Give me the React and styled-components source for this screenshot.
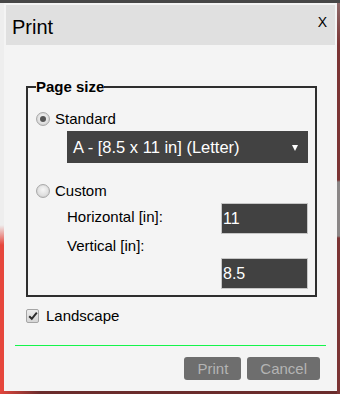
import React from "react";
import styled, { createGlobalStyle } from "styled-components";

const Global = createGlobalStyle`
  html, body { margin: 0; padding: 0; }
  body { font-family: "Liberation Sans", Arial, sans-serif; color: #000; }
  * { box-sizing: border-box; }
`;

const Page = styled.div`
  width: 340px;
  height: 394px;
  padding: 3px 3px 3px 4px;
  display: flex;
  background:
    linear-gradient(#474747, #474747) left top / 100% 3px no-repeat,
    linear-gradient(to bottom, #8f6e6e 0, #7b3434 45px, #7b3434 180px, #8a8686 182px, #8a8686 236px, #7b3434 238px) right top / 3px 100% no-repeat,
    linear-gradient(to right, #e2463d, #6a2c2c 40px, #6a2c2c) left bottom / 100% 3px no-repeat,
    linear-gradient(to bottom, #eeeeee 0, #eeeeee 225px, #e6463c 245px, #e6463c) left top / 4px 100% no-repeat,
    #eeeeee;
`;

const Dialog = styled.div`
  width: 333px;
  height: 388px;
  padding: 2px;
  background: #f4f4f4;
  display: flex;
  flex-direction: column;
`;

const Header = styled.div`
  height: 40px;
  flex: none;
  background: #e0e0e0;
  display: flex;
  justify-content: space-between;
  align-items: flex-start;
  padding: 0 8px 0 6px;
`;

const Title = styled.div`
  font-size: 20px;
  line-height: 40px;
  padding-top: 2px;
`;

const Close = styled.div`
  font-size: 14px;
  line-height: 16px;
  margin-top: 9px;
  cursor: pointer;
`;

const FormArea = styled.div`
  padding: 0 18px 0 20px;
  display: flex;
  flex-direction: column;
`;

const Fieldset = styled.fieldset`
  margin: 33px 0 0 0;
  border: 2px solid #2e2e2e;
  padding: 14px 7px 6px 8px;
  min-width: 0;
  display: flex;
  flex-direction: column;
`;

const Legend = styled.legend`
  font-size: 15px;
  font-weight: bold;
  line-height: 17px;
  padding: 0;
`;

const OptionRow = styled.label`
  display: flex;
  align-items: center;
  gap: ${(p) => p.$gap || 5}px;
  height: 20px;
  font-size: 15px;
  line-height: 20px;
  margin-top: ${(p) => p.$mt || 0}px;
`;

const Radio = styled.span`
  width: 14px;
  height: 14px;
  border-radius: 50%;
  border: 1px solid #a9a9a9;
  background: radial-gradient(circle at 50% 40%, #f6f6f6 0, #dcdcdc 70%, #c9c9c9 100%);
  box-shadow: inset 0 0 1px rgba(0,0,0,0.15);
  display: flex;
  align-items: center;
  justify-content: center;
  flex: none;
  &::after {
    content: "";
    width: 6px;
    height: 6px;
    border-radius: 50%;
    background: ${(p) => (p.$checked ? "#555" : "transparent")};
  }
`;

const Checkbox = styled.span`
  width: 13px;
  height: 14px;
  border: 1px solid #a5a5a5;
  border-radius: 2px;
  background: linear-gradient(#ececec, #d6d6d6);
  display: flex;
  align-items: center;
  justify-content: center;
  flex: none;
`;

const SelectBox = styled.div`
  margin: 2px 0 0 31px;
  height: 32px;
  background: #424242;
  color: #fff;
  font-size: 16.5px;
  line-height: 32px;
  display: flex;
  justify-content: space-between;
  align-items: center;
  padding: 0 10px 0 6px;
`;

const Arrow = styled.span`
  width: 0;
  height: 0;
  border-left: 3px solid transparent;
  border-right: 3px solid transparent;
  border-top: 6px solid #fff;
  margin-top: 1px;
`;

const DimGrid = styled.div`
  margin: 2px 0 0 31px;
  display: grid;
  grid-template-columns: 1fr 87px;
  grid-template-rows: 31px 20px 31px;
  row-gap: 2px;
`;

const DimLabel = styled.span`
  font-size: 15px;
  line-height: 20px;
  margin-top: ${(p) => p.$mt || 0}px;
  grid-column: 1;
  grid-row: ${(p) => p.$row};
  align-self: start;
`;

const DimInput = styled.div`
  grid-column: 2;
  grid-row: ${(p) => p.$row};
  height: 31px;
  border: 1px solid #c6c6c6;
  background: #414141;
  color: #fff;
  font-size: 16px;
  line-height: 29px;
  padding: 0 1px;
`;

const GreenRule = styled.hr`
  margin: 19px 9px 0 9px;
  height: 1px;
  border: none;
  background-color: rgb(20, 245, 75);
  flex: none;
`;

const Buttons = styled.div`
  margin-top: 11px;
  display: flex;
  justify-content: flex-end;
  gap: 6px;
  padding-right: 15px;
`;

const Button = styled.button`
  height: 23px;
  padding: 0 13px;
  border: none;
  border-radius: 3px;
  background: #6e6e6e;
  color: #b4b4b4;
  font-family: "Liberation Sans", Arial, sans-serif;
  font-size: 15px;
  line-height: 21px;
`;

export default function App() {
  return (
    <>
      <Global />
      <Page>
        <Dialog>
          <Header>
            <Title>Print</Title>
            <Close>X</Close>
          </Header>
          <FormArea>
            <Fieldset>
              <Legend>Page size</Legend>
              <OptionRow>
                <Radio $checked />
                Standard
              </OptionRow>
              <SelectBox>
                <span>A - [8.5 x 11 in] (Letter)</span>
                <Arrow />
              </SelectBox>
              <OptionRow $mt={18}>
                <Radio />
                Custom
              </OptionRow>
              <DimGrid>
                <DimLabel $row={1} $mt={4}>Horizontal [in]:</DimLabel>
                <DimInput $row={1}>11</DimInput>
                <DimLabel $row={2}>Vertical [in]:</DimLabel>
                <DimInput $row={3}>8.5</DimInput>
              </DimGrid>
            </Fieldset>
            <OptionRow $mt={9} $gap={7}>
              <Checkbox>
                <svg width="10" height="10" viewBox="0 0 10 10">
                  <path d="M1.2 5.2 L3.8 7.8 L8.8 1.6" fill="none" stroke="#2d2d2d" strokeWidth="2" />
                </svg>
              </Checkbox>
              Landscape
            </OptionRow>
          </FormArea>
          <GreenRule />
          <Buttons>
            <Button>Print</Button>
            <Button>Cancel</Button>
          </Buttons>
        </Dialog>
      </Page>
    </>
  );
}
